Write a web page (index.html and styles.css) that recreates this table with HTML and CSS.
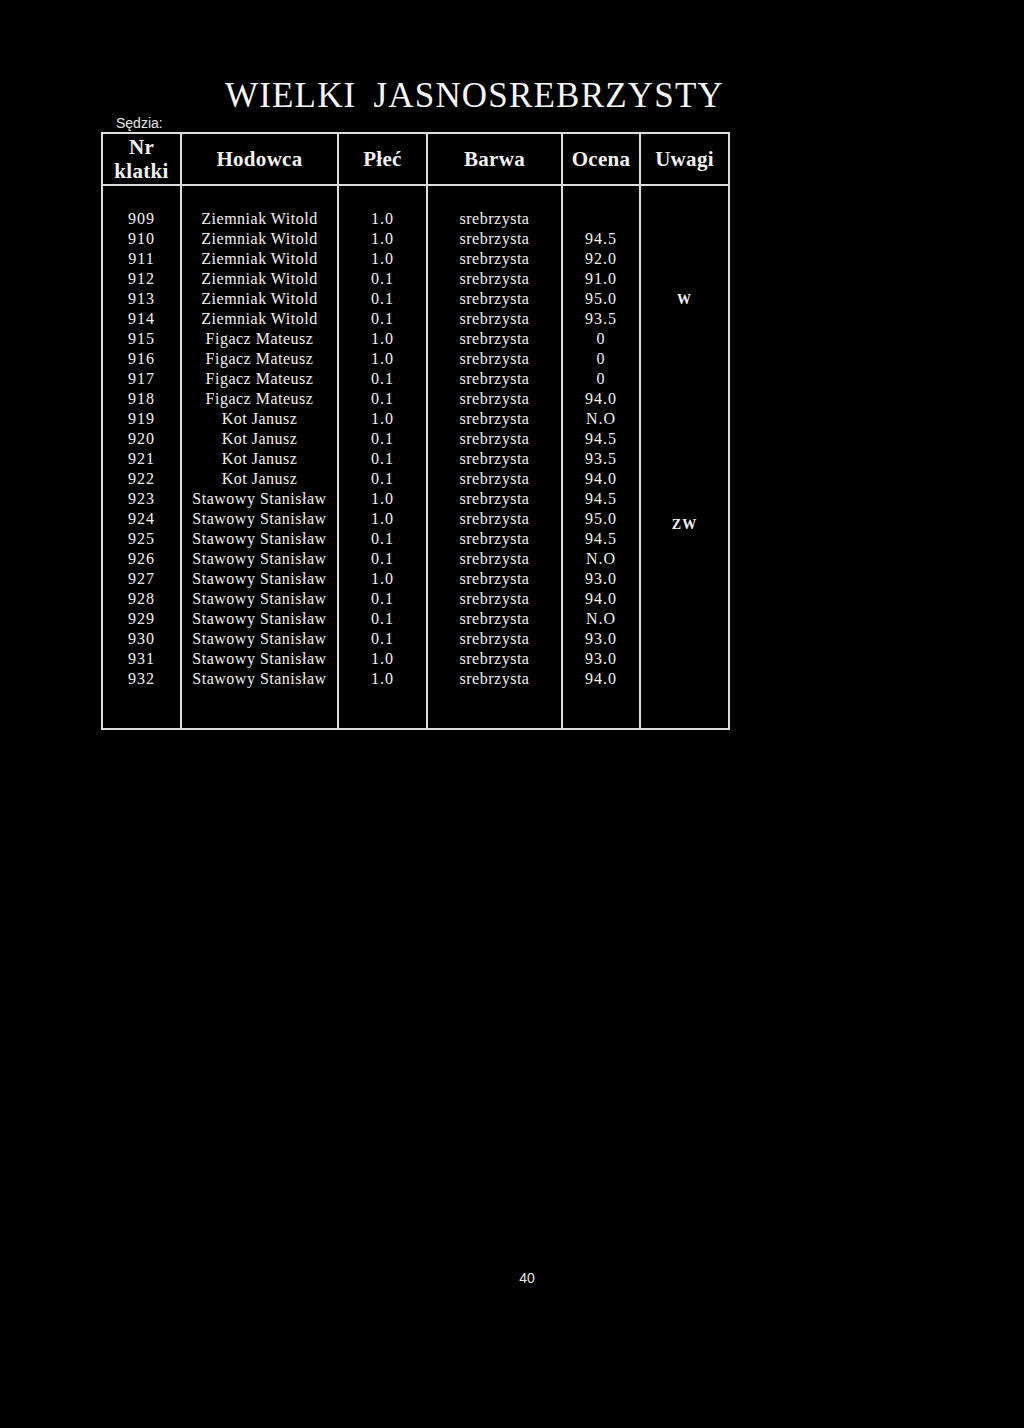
FILE: index.html
```html
<!DOCTYPE html>
<html lang="pl">
<head>
<meta charset="utf-8">
<title>Wielki Jasnosrebrzysty</title>
<link rel="stylesheet" href="styles.css">
</head>
<body>
<div class="page">
  <div class="sheet">
    <h1 class="title">WIELKI JASNOSREBRZYSTY</h1>
    <div class="judge">Sędzia:</div>
    <table class="results">
      <thead>
        <tr>
          <th class="c-nr">Nr<br>klatki</th>
          <th class="c-hod">Hodowca</th>
          <th class="c-sex">Płeć</th>
          <th class="c-col">Barwa</th>
          <th class="c-score">Ocena</th>
          <th class="c-note">Uwagi</th>
        </tr>
      </thead>
      <tbody>
        <tr class="spacer-top"><td></td><td></td><td></td><td></td><td></td><td></td></tr>
        <tr><td class="num">909</td><td>Ziemniak Witold</td><td class="num">1.0</td><td>srebrzysta</td><td class="num"></td><td></td></tr>
        <tr><td class="num">910</td><td>Ziemniak Witold</td><td class="num">1.0</td><td>srebrzysta</td><td class="num">94.5</td><td></td></tr>
        <tr><td class="num">911</td><td>Ziemniak Witold</td><td class="num">1.0</td><td>srebrzysta</td><td class="num">92.0</td><td></td></tr>
        <tr><td class="num">912</td><td>Ziemniak Witold</td><td class="num">0.1</td><td>srebrzysta</td><td class="num">91.0</td><td></td></tr>
        <tr><td class="num">913</td><td>Ziemniak Witold</td><td class="num">0.1</td><td>srebrzysta</td><td class="num">95.0</td><td class="note">W</td></tr>
        <tr><td class="num">914</td><td>Ziemniak Witold</td><td class="num">0.1</td><td>srebrzysta</td><td class="num">93.5</td><td></td></tr>
        <tr><td class="num">915</td><td>Figacz Mateusz</td><td class="num">1.0</td><td>srebrzysta</td><td class="num">0</td><td></td></tr>
        <tr><td class="num">916</td><td>Figacz Mateusz</td><td class="num">1.0</td><td>srebrzysta</td><td class="num">0</td><td></td></tr>
        <tr><td class="num">917</td><td>Figacz Mateusz</td><td class="num">0.1</td><td>srebrzysta</td><td class="num">0</td><td></td></tr>
        <tr><td class="num">918</td><td>Figacz Mateusz</td><td class="num">0.1</td><td>srebrzysta</td><td class="num">94.0</td><td></td></tr>
        <tr><td class="num">919</td><td>Kot Janusz</td><td class="num">1.0</td><td>srebrzysta</td><td class="num">N.O</td><td></td></tr>
        <tr><td class="num">920</td><td>Kot Janusz</td><td class="num">0.1</td><td>srebrzysta</td><td class="num">94.5</td><td></td></tr>
        <tr><td class="num">921</td><td>Kot Janusz</td><td class="num">0.1</td><td>srebrzysta</td><td class="num">93.5</td><td></td></tr>
        <tr><td class="num">922</td><td>Kot Janusz</td><td class="num">0.1</td><td>srebrzysta</td><td class="num">94.0</td><td></td></tr>
        <tr><td class="num">923</td><td>Stawowy Stanisław</td><td class="num">1.0</td><td>srebrzysta</td><td class="num">94.5</td><td></td></tr>
        <tr><td class="num">924</td><td>Stawowy Stanisław</td><td class="num">1.0</td><td>srebrzysta</td><td class="num">95.0</td><td class="note note-zw" rowspan="2">ZW</td></tr>
        <tr><td class="num">925</td><td>Stawowy Stanisław</td><td class="num">0.1</td><td>srebrzysta</td><td class="num">94.5</td></tr>
        <tr><td class="num">926</td><td>Stawowy Stanisław</td><td class="num">0.1</td><td>srebrzysta</td><td class="num">N.O</td><td></td></tr>
        <tr><td class="num">927</td><td>Stawowy Stanisław</td><td class="num">1.0</td><td>srebrzysta</td><td class="num">93.0</td><td></td></tr>
        <tr><td class="num">928</td><td>Stawowy Stanisław</td><td class="num">0.1</td><td>srebrzysta</td><td class="num">94.0</td><td></td></tr>
        <tr><td class="num">929</td><td>Stawowy Stanisław</td><td class="num">0.1</td><td>srebrzysta</td><td class="num">N.O</td><td></td></tr>
        <tr><td class="num">930</td><td>Stawowy Stanisław</td><td class="num">0.1</td><td>srebrzysta</td><td class="num">93.0</td><td></td></tr>
        <tr><td class="num">931</td><td>Stawowy Stanisław</td><td class="num">1.0</td><td>srebrzysta</td><td class="num">93.0</td><td></td></tr>
        <tr><td class="num">932</td><td>Stawowy Stanisław</td><td class="num">1.0</td><td>srebrzysta</td><td class="num">94.0</td><td></td></tr>
        <tr class="spacer-bottom"><td></td><td></td><td></td><td></td><td></td><td></td></tr>
      </tbody>
    </table>
  </div>
  <div class="page-number">40</div>
</div>
</body>
</html>
```

FILE: styles.css
```css
html, body {
  margin: 0;
  padding: 0;
  background: #000;
}

body {
  width: 1024px;
  min-height: 1428px;
  color: #f2f2f2;
  font-family: "Liberation Serif", "Times New Roman", serif;
}

.page {
  padding-top: 79px;
}

.sheet {
  margin-left: 101px;
  width: 629px;
}

.title {
  margin: 0;
  padding-right: 6px;
  text-align: right;
  font-size: 35px;
  line-height: 34px;
  font-weight: normal;
  letter-spacing: 1.2px;
  word-spacing: 7px;
  color: #f6f6f6;
}

.judge {
  margin-top: 3px;
  padding-left: 15px;
  height: 15px;
  font-family: "Liberation Sans", Arial, sans-serif;
  font-size: 14px;
  line-height: 15px;
  color: #e6e6e6;
}

.results {
  margin-top: 1px;
  width: 629px;
  table-layout: fixed;
  border-collapse: separate;
  border-spacing: 0;
  border: 2px solid #dcdcdc;
}

.results th,
.results td {
  box-sizing: border-box;
  padding: 0;
  text-align: center;
  border-left: 2px solid #dcdcdc;
}

.results tr > :first-child {
  border-left: none;
}

.results td.note {
  border-left: 2px solid #dcdcdc;
}

.results th {
  height: 52px;
  border-bottom: 2px solid #dcdcdc;
  font-size: 21px;
  line-height: 24px;
  font-weight: bold;
  letter-spacing: 0.3px;
  vertical-align: middle;
}

.c-nr { width: 77px; }
.c-hod { width: 157px; }
.c-sex { width: 89px; }
.c-col { width: 135px; }
.c-score { width: 78px; }
.c-note { width: 89px; }

.results td {
  height: 20px;
  font-size: 16px;
  line-height: 20px;
  letter-spacing: 0.5px;
  white-space: nowrap;
  vertical-align: middle;
}

.results td.num {
  letter-spacing: 1px;
}

.results .spacer-top td {
  height: 23px;
}

.results .spacer-bottom td {
  height: 39px;
}

.results td.note {
  font-size: 14px;
  line-height: 18px;
  font-weight: bold;
  letter-spacing: 1px;
  padding-top: 2px;
}

.results td.note-zw {
  vertical-align: top;
  padding-top: 7px;
}

.page-number {
  margin-top: 540px;
  padding-left: 30px;
  text-align: center;
  font-family: "Liberation Sans", Arial, sans-serif;
  font-size: 14px;
  line-height: 16px;
  color: #e6e6e6;
}
```
